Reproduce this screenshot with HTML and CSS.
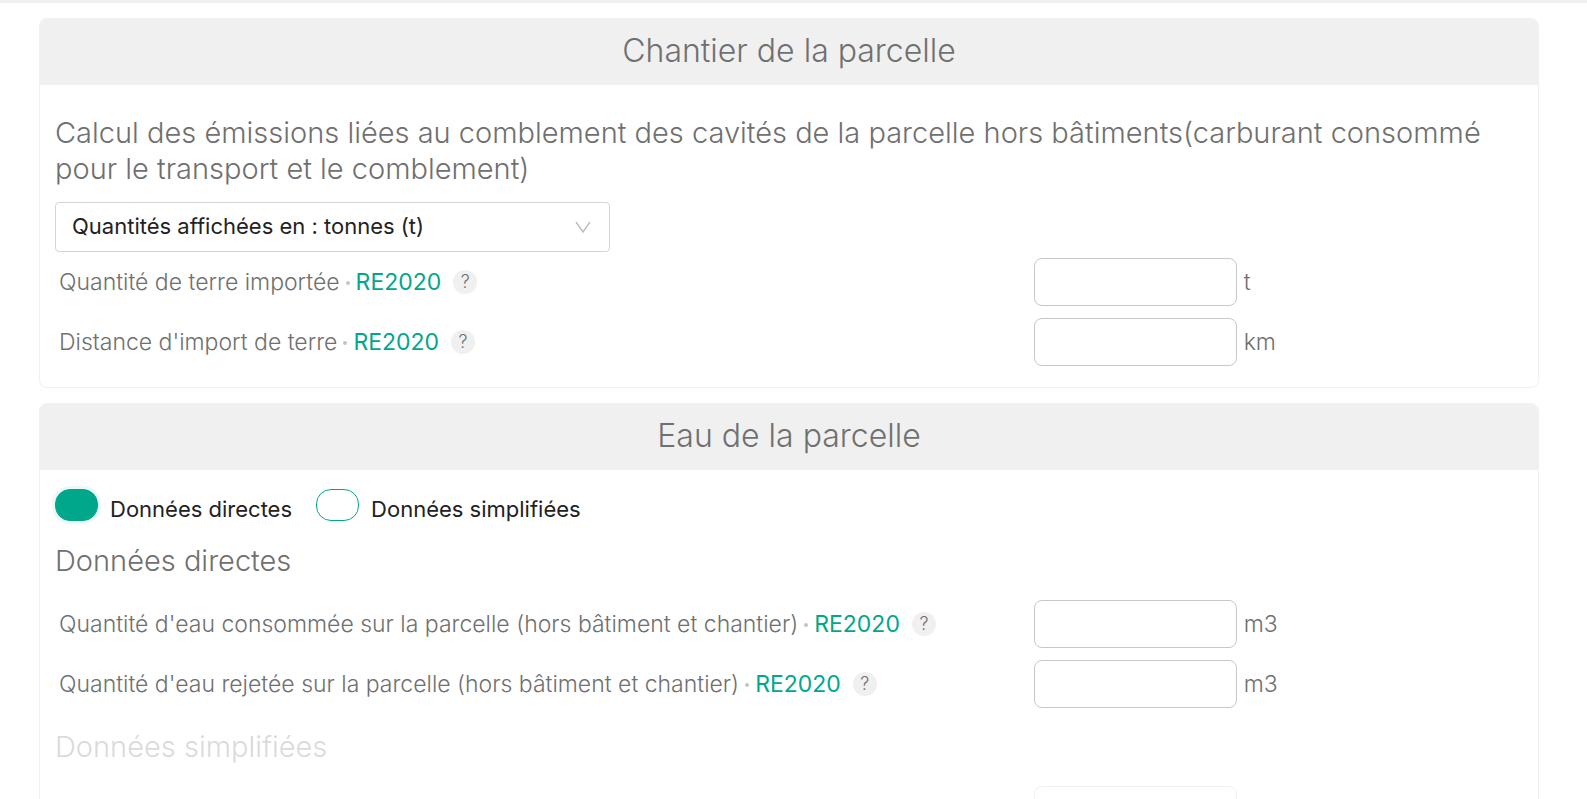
FILE: index.html
```html
<!DOCTYPE html>
<html lang="fr">
<head>
<meta charset="utf-8">
<meta name="viewport" content="width=device-width, initial-scale=1">
<title>Parcelle</title>
<link rel="stylesheet" href="styles.css">
</head>
<body>
<main class="page">
  <section class="card">
    <h2 class="card-title">Chantier de la parcelle</h2>
    <div class="card-body">
      <h3 class="heading">Calcul des émissions liées au comblement des cavités de la parcelle hors bâtiments(carburant consommé pour le transport et le comblement)</h3>
      <div class="select-box">
        <select class="select" aria-label="Unité des quantités">
          <option>Quantités affichées en : tonnes (t)</option>
        </select>
        <svg class="chevron" viewBox="0 0 16 14" aria-hidden="true"><path d="M1 2l7 10 7-10"/></svg>
      </div>
      <div class="row">
        <div class="row-label"><label for="terre">Quantité de terre importée</label><span class="dot"></span><span class="tag">RE2020</span><button class="help" type="button">?</button></div>
        <div class="row-field"><input class="field" id="terre" type="text"><span>t</span></div>
      </div>
      <div class="row">
        <div class="row-label"><label for="distance">Distance d'import de terre</label><span class="dot"></span><span class="tag">RE2020</span><button class="help" type="button">?</button></div>
        <div class="row-field"><input class="field" id="distance" type="text"><span>km</span></div>
      </div>
    </div>
  </section>

  <section class="card">
    <h2 class="card-title">Eau de la parcelle</h2>
    <div class="card-body">
      <div class="choices">
        <label class="choice"><input class="pill" type="radio" name="mode" checked><span>Données directes</span></label>
        <label class="choice"><input class="pill" type="radio" name="mode"><span>Données simplifiées</span></label>
      </div>
      <h3 class="heading">Données directes</h3>
      <div class="row">
        <div class="row-label"><label for="conso">Quantité d'eau consommée sur la parcelle (hors bâtiment et chantier)</label><span class="dot"></span><span class="tag">RE2020</span><button class="help" type="button">?</button></div>
        <div class="row-field"><input class="field" id="conso" type="text"><span>m3</span></div>
      </div>
      <div class="row">
        <div class="row-label"><label for="rejet">Quantité d'eau rejetée sur la parcelle (hors bâtiment et chantier)</label><span class="dot"></span><span class="tag">RE2020</span><button class="help" type="button">?</button></div>
        <div class="row-field"><input class="field" id="rejet" type="text"><span>m3</span></div>
      </div>
      <div class="inactive">
        <h3 class="heading" id="simple">Données simplifiées</h3>
        <div class="row">
          <div class="row-label"></div>
          <div class="row-field"><input class="field" type="text" aria-labelledby="simple" disabled></div>
        </div>
      </div>
    </div>
  </section>
</main>
</body>
</html>
```
FILE: styles.css
```css
*, *::before, *::after { box-sizing: border-box; }

body {
  margin: 0;
  height: 100vh;
  overflow: hidden;
  background: #fff;
  color: #707070;
  font-family: Inter, "Open Sans", sans-serif;
  font-size: 22px;
  font-weight: 300;
  line-height: 32px;
}

.page {
  display: flex;
  flex-direction: column;
  gap: 15px;
  padding: 15px 48px 15px 39px;
  border-top: 3px solid #f0f0f0;
}

.card {
  border: 1px solid #f0f0f0;
  border-radius: 8px;
}

.card-title {
  margin: 0;
  padding: 12px 16px 14px;
  border-radius: 7px 7px 0 0;
  background: #f0f0f0;
  font-size: 32px;
  font-weight: 300;
  line-height: 40px;
  text-align: center;
}

.card-body { padding: 15px; }

.heading {
  margin: 15px 0;
  font-size: 29px;
  font-weight: 300;
  line-height: 36px;
}

.select-box {
  position: relative;
  width: 555px;
  max-width: 100%;
}

.select {
  display: block;
  width: 100%;
  height: 50px;
  padding: 0 48px 2px 16px;
  border: 1px solid #d4d4d4;
  border-radius: 4px;
  appearance: none;
  background: #fff;
  color: #222;
  font: inherit;
  font-weight: 400;
}

.chevron {
  position: absolute;
  top: 18px;
  right: 19px;
  width: 16px;
  height: 14px;
  fill: none;
  stroke: #bfbfbf;
  stroke-width: 1.5;
  pointer-events: none;
}

.row {
  display: grid;
  grid-template-columns: 2fr 1fr;
  align-items: center;
  min-height: 60px;
  font-size: 23px;
}

.row-label {
  display: flex;
  align-items: center;
  padding-left: 4px;
}

.dot {
  width: 4px;
  height: 4px;
  margin: 2px 6px 0;
  border-radius: 50%;
  background: #c4c4c4;
}

.tag {
  color: #00a78b;
  font-weight: 400;
}

.help {
  width: 24px;
  height: 24px;
  margin-left: 12px;
  padding: 0;
  border: 0;
  border-radius: 50%;
  background: #f0f0f0;
  color: #707070;
  font: inherit;
  font-size: 18px;
  line-height: 24px;
}

.row-field {
  display: flex;
  align-items: center;
  gap: 7px;
}

.field {
  width: 203px;
  height: 48px;
  padding: 0 12px;
  border: 1px solid #c8c8c8;
  border-radius: 8px;
  background: #fff;
  color: #222;
  font: inherit;
}

.choices {
  display: flex;
  gap: 24px;
  min-height: 43px;
  color: #222;
  font-weight: 400;
}

.choice {
  display: flex;
  gap: 12px;
  padding-top: 4px;
}

.choice span { padding-top: 4px; }

.pill {
  width: 43px;
  height: 32px;
  margin: 0;
  border: 1px solid #00a78b;
  border-radius: 15px;
  appearance: none;
  background: #fff;
}

.pill:checked {
  background: #00a78b;
  box-shadow: 0 0 0 3px #ebf8f6;
}

.inactive { opacity: 0.25; }
```
